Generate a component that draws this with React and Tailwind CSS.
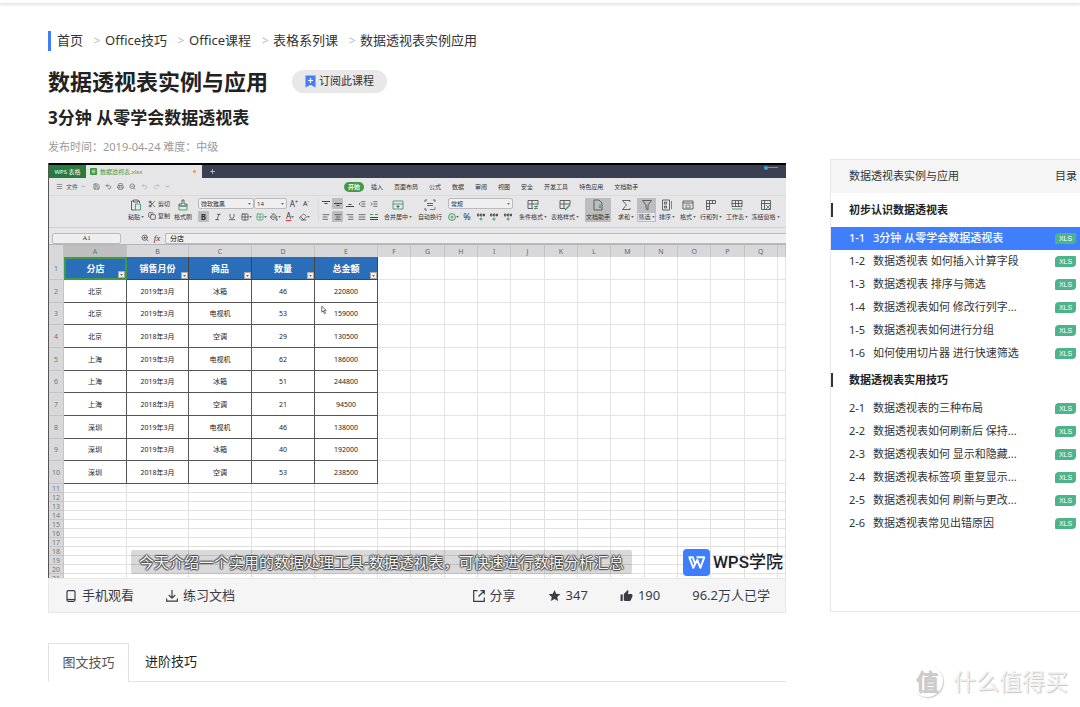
import {
  AlignCenter,
  AlignJustify,
  AlignLeft,
  AlignRight,
  ChevronDown,
  Clipboard,
  Copy,
  Eraser,
  Grid2x2,
  Indent,
  Italic,
  Menu,
  Outdent,
  PaintBucket,
  Plus,
  Printer,
  Redo2,
  Save,
  Scissors,
  SearchCheck,
  Undo2,
  Underline,
  ZoomIn,
} from 'lucide-react';
import clsx from 'clsx';

const crumbs = ['首页', 'Office技巧', 'Office课程', '表格系列课', '数据透视表实例应用'];

const menus = ['插入', '页面布局', '公式', '数据', '审阅', '视图', '安全', '开发工具', '特色应用', '文档助手'];

const columns = ['A', 'B', 'C', 'D', 'E', 'F', 'G', 'H', 'I', 'J', 'K', 'L', 'M', 'N', 'O', 'P', 'Q', ''];

const sheet = [
  ['分店', '销售月份', '商品', '数量', '总金额'],
  ['北京', '2019年3月', '冰箱', '46', '220800'],
  ['北京', '2019年3月', '电视机', '53', '159000'],
  ['北京', '2018年3月', '空调', '29', '130500'],
  ['上海', '2019年3月', '电视机', '62', '186000'],
  ['上海', '2019年3月', '冰箱', '51', '244800'],
  ['上海', '2018年3月', '空调', '21', '94500'],
  ['深圳', '2019年3月', '电视机', '46', '138000'],
  ['深圳', '2019年3月', '冰箱', '40', '192000'],
  ['深圳', '2018年3月', '空调', '53', '238500'],
];

const emptyRows = [11, 12, 13, 14, 15, 16, 17, 18, 19, 20, 21];

const chapters = [
  {
    title: '初步认识数据透视表',
    lessons: [
      { no: '1-1', name: '3分钟 从零学会数据透视表', active: true },
      { no: '1-2', name: '数据透视表 如何插入计算字段' },
      { no: '1-3', name: '数据透视表 排序与筛选' },
      { no: '1-4', name: '数据透视表如何 修改行列字...' },
      { no: '1-5', name: '数据透视表如何进行分组' },
      { no: '1-6', name: '如何使用切片器 进行快速筛选' },
    ],
  },
  {
    title: '数据透视表实用技巧',
    lessons: [
      { no: '2-1', name: '数据透视表的三种布局' },
      { no: '2-2', name: '数据透视表如何刷新后 保持...' },
      { no: '2-3', name: '数据透视表如何 显示和隐藏...' },
      { no: '2-4', name: '数据透视表标签项 重复显示...' },
      { no: '2-5', name: '数据透视表如何 刷新与更改...' },
      { no: '2-6', name: '数据透视表常见出错原因' },
    ],
  },
];

function Caret() {
  return (
    <svg viewBox="0 0 4 3" className="w-[3px] h-[2px] shrink-0" fill="#666">
      <path d="M0 0h4L2 3z" />
    </svg>
  );
}

// Big ribbon button: drawing on top, label below
function Tool({ label, width, caret, active, split, children }) {
  return (
    <button
      type="button"
      className={clsx(
        'h-6 shrink-0 flex flex-col items-center justify-between rounded-[1px] whitespace-nowrap',
        width,
        active && 'bg-[#bdbdbf]'
      )}
    >
      <span className={clsx('w-full h-[14px] flex items-center justify-center', split && 'bg-[#bdbdbf]')}>
        <svg viewBox="0 0 12 12" className="size-3" fill="none" stroke="#555" strokeWidth="0.9">
          {children}
        </svg>
      </span>
      <span className={clsx('h-[10px] flex items-center gap-px', split && 'border border-[#bdbdbf]')}>
        {label}
        {caret && <Caret />}
      </span>
    </button>
  );
}

function IconButton({ label, active, children }) {
  return (
    <button
      type="button"
      aria-label={label}
      className={clsx('size-[11px] flex items-center justify-center rounded-[1px]', active && 'bg-[#bdbdbf]')}
    >
      {children}
    </button>
  );
}

function Picker({ label, value, width }) {
  return (
    <span className={clsx('h-[11px] flex items-center border border-[#bbb] bg-[#efeff0] rounded-[2px] px-0.5', width)}>
      <select aria-label={label} className="flex-1 min-w-0 appearance-none leading-none outline-none">
        <option>{value}</option>
      </select>
      <Caret />
    </span>
  );
}

function Ribbon() {
  return (
    <div className="h-8 pt-0.5 pl-[75px] flex items-start border-b border-[#cfcfd1] overflow-hidden">
      <Tool label="粘贴" width="w-6" caret>
        <path d="M3.500 2H1.500v9h4M8 2h1.500v2M3.500 1h4.500v2H3.500z" />
        <path d="M5.500 5h5v6h-5z" stroke="#3a9d62" />
      </Tool>
      <div className="w-6 h-6 shrink-0 flex flex-col justify-between whitespace-nowrap">
        <button type="button" className="h-3 flex items-center gap-0.5">
          <Scissors className="size-2" /> 剪切
        </button>
        <button type="button" className="h-3 flex items-center gap-0.5">
          <Copy className="size-2" /> 复制
        </button>
      </div>
      <Tool label="格式刷" width="w-[22px]">
        <path d="M5 1h2v4h3v2H2V5h3z" />
        <path d="M2 7h8v4H2z" stroke="#3a9d62" />
      </Tool>

      <div className="w-[116px] ml-1 h-6 shrink-0 flex flex-col justify-between">
        <div className="flex items-center">
          <Picker label="字体" value="微软雅黑" width="w-[56px]" />
          <Picker label="字号" value="14" width="w-[33px]" />
          <button type="button" className="w-3 text-[8px] leading-none ml-px">A<sup>+</sup></button>
          <button type="button" className="w-3 text-[7px] leading-none">A<sup>-</sup></button>
        </div>
        <div className="flex items-center justify-between pr-1">
          <IconButton label="加粗" active><b className="text-[8px] leading-none">B</b></IconButton>
          <IconButton label="倾斜"><Italic className="size-2" /></IconButton>
          <IconButton label="下划线"><Underline className="size-2" /></IconButton>
          <IconButton label="边框"><Grid2x2 className="size-2 shrink-0" /><Caret /></IconButton>
          <IconButton label="绘制表格"><Grid2x2 className="size-2 shrink-0 text-[#3a9d62]" /><Caret /></IconButton>
          <IconButton label="填充颜色"><PaintBucket className="size-2 shrink-0" /><Caret /></IconButton>
          <IconButton label="字体颜色"><span className="text-[8px] leading-none border-b border-red-500">A</span><Caret /></IconButton>
          <IconButton label="清除"><Eraser className="size-2 shrink-0" /><Caret /></IconButton>
        </div>
      </div>

      <div className="w-[62px] ml-1 h-6 shrink-0 grid grid-cols-5 content-between border-l border-[#dadadc] pl-px">
        <IconButton label="顶端对齐">
          <svg viewBox="0 0 8 8" className="size-2" stroke="#444" fill="none"><path d="M0 1.500h8M2.500 3.500h3" /></svg>
        </IconButton>
        <IconButton label="垂直居中" active>
          <svg viewBox="0 0 8 8" className="size-2" stroke="#444" fill="none"><path d="M0 3.500h8M2.500 5.500h3" /></svg>
        </IconButton>
        <IconButton label="底端对齐">
          <svg viewBox="0 0 8 8" className="size-2" stroke="#444" fill="none"><path d="M0 6.500h8M2.500 4.500h3" /></svg>
        </IconButton>
        <IconButton label="减少缩进"><Outdent className="size-2" /></IconButton>
        <IconButton label="增加缩进"><Indent className="size-2" /></IconButton>
        <IconButton label="左对齐"><AlignLeft className="size-2" /></IconButton>
        <IconButton label="居中" active><AlignCenter className="size-2" /></IconButton>
        <IconButton label="右对齐"><AlignRight className="size-2" /></IconButton>
        <IconButton label="两端对齐"><AlignJustify className="size-2" /></IconButton>
        <IconButton label="分散对齐">
          <svg viewBox="0 0 8 8" className="size-2" stroke="#444" fill="none">
            <path d="M0 4.500h8M0 6.500h8" /><path d="M0 1.500h3M5 1.500h3" stroke="#3a9d62" />
          </svg>
        </IconButton>
      </div>

      <Tool label="合并居中" width="w-9" caret>
        <path d="M1 2h10v8H1zM1 5h10" stroke="#3a9d62" />
        <path d="M6 6v3M4.500 7.500h3" />
      </Tool>
      <Tool label="自动换行" width="w-7">
        <path d="M3 1H1v2M9 1h2v2M3 4.500h6M3 6.500h6M1 9v2h2" />
        <path d="M6 10.500h5V8" stroke="#3a9d62" />
      </Tool>

      <div className="w-[65px] mx-1 h-6 shrink-0 flex flex-col justify-between">
        <Picker label="数字格式" value="常规" width="w-full" />
        <div className="flex items-center justify-between">
          <IconButton label="货币">
            <svg viewBox="0 0 8 8" className="size-2 shrink-0" stroke="#3a9d62" fill="none"><circle cx="4" cy="4" r="3.400" /><circle cx="4" cy="4" r="1" /></svg>
            <Caret />
          </IconButton>
          <IconButton label="百分比"><span className="text-[9px] leading-none">%</span></IconButton>
          {['千位分隔', '增加小数位', '减少小数位'].map((name) => (
            <IconButton key={name} label={name}>
              <svg viewBox="0 0 8 8" className="size-2" stroke="#555" fill="none">
                <path d="M.5 1h1.500v2H.5zM3.500 1H5v2H3.500zM6.500 1h1v2h-1z" /><path d="M4 4.500v3M2.500 6h3" stroke="#3a9d62" />
              </svg>
            </IconButton>
          ))}
        </div>
      </div>

      <Tool label="条件格式" width="w-8" caret>
        <path d="M1 1.500h10v4M1 1.500v8h5M1 5h10M5 1.500v8" />
        <path d="M7 7.500h4M7 9.500h4M10 6.500l-2 4" stroke="#3a9d62" />
      </Tool>
      <Tool label="表格样式" width="w-8" caret>
        <path d="M1 1.500h10v4M1 1.500v8h5M1 5h10M5 1.500v8" />
        <path d="M6 11l5-5" stroke="#3a9d62" strokeWidth="1.500" />
      </Tool>
      <div className="mx-1 shrink-0">
        <Tool label="文档助手" width="w-[26px]" active>
          <path d="M2 1h5l3 3v7H2z" />
          <path d="M8 5v4M6.500 7.500L8 9l1.500-1.500" stroke="#3a9d62" />
        </Tool>
      </div>
      <Tool label="求和" width="w-[22px]" caret>
        <path d="M10 3V1.500H2.500L6.500 6l-4 4.500H10V9" />
      </Tool>
      <Tool label="筛选" width="w-[19px]" caret split>
        <path d="M1.500 1.500h9L7 6v5L5 9.500V6z" />
      </Tool>
      <Tool label="排序" width="w-[22px]" caret>
        <path d="M1.500 1h7v10h-7zM3.500 3h2v2h-2zM3.500 7h2v2h-2z" />
        <path d="M10.500 2v8" stroke="#3a9d62" />
      </Tool>
      <Tool label="格式" width="w-5" caret>
        <path d="M1 2h10v8H1zM1 4h10" />
        <path d="M4 6h4v3H4z" stroke="#3a9d62" />
      </Tool>
      <Tool label="行和列" width="w-[26px]" caret>
        <path d="M1.500 1.500h9v3h-6v6h-3zM4.500 1.500v3h-3M7.500 1.500v3M1.500 7.500h3" />
      </Tool>
      <Tool label="工作表" width="w-[26px]" caret>
        <path d="M1 1.500h10v6H1zM4.500 1.500v6M7.500 1.500v6M1 4.500h10" />
        <path d="M1 10h10" stroke="#3a9d62" />
      </Tool>
      <Tool label="冻结窗格" width="w-[31px]" caret>
        <path d="M1.500 1.500h9v9h-9zM1.500 4.500h9M4.500 1.500v9" />
        <path d="M6 6l4 4M10 6l-4 4" stroke="#3a9d62" />
      </Tool>
    </div>
  );
}

function Sheet() {
  return (
    <div className="h-[334px] overflow-hidden border-t border-[#b5b5b8] bg-white">
      <table className="w-full table-fixed border-separate border-spacing-0 text-center text-[7px] leading-[7px] text-[#222]">
        <colgroup>
          <col className="w-[15px]" />
          <col className="w-[63px]" />
          <col className="w-[62px]" />
          <col className="w-[63px]" />
          <col className="w-[63px]" />
          <col className="w-[63px]" />
          {columns.slice(5, 17).map((c) => <col key={c} />)}
          <col className="w-2" />
        </colgroup>
        <thead>
          <tr className="h-3 bg-[#d8d8da] text-[#666]">
            <th className="border-r border-[#c4c4c6]" />
            {columns.map((c, i) => (
              <th
                key={i}
                className={clsx('font-normal border-r border-[#c4c4c6]', i === 0 && 'bg-[#bfbfc1] text-[#3a8f4a]')}
              >
                {c}
              </th>
            ))}
          </tr>
        </thead>
        <tbody>
          {sheet.map((row, r) => (
            <tr key={r} className={r % 3 === 2 ? 'h-[22px]' : 'h-[23px]'}>
              <th className="font-normal text-[#777] bg-[#d8d8da] border-r border-b border-[#c4c4c6]">{r + 1}</th>
              {row.map((cell, c) =>
                r === 0 ? (
                  <th
                    key={c}
                    className={clsx(
                      'relative bg-[#2a6db8] text-white text-[9px] leading-[9px] font-bold',
                      c === 0 ? 'border-2 border-[#3f9a45]' : 'border-r border-b border-[#444]'
                    )}
                  >
                    {cell}
                    <span className="absolute right-0 bottom-0 size-[7px] bg-[#eee] border border-[#aaa] flex items-center justify-center">
                      <Caret />
                    </span>
                  </th>
                ) : (
                  <td key={c} className="border-r border-b border-[#555]">{cell}</td>
                )
              )}
              {columns.slice(5).map((c, i) => (
                <td key={i} className="border-r border-b border-[#e4e4e4]" />
              ))}
            </tr>
          ))}
          {emptyRows.map((n) => (
            <tr key={n} className="h-[9px]">
              <th className="font-normal text-[#777] bg-[#d8d8da] border-r border-b border-[#c4c4c6]">{n}</th>
              {columns.map((c, i) => (
                <td key={i} className="border-r border-b border-[#e0e0e0]" />
              ))}
            </tr>
          ))}
        </tbody>
      </table>
    </div>
  );
}

function Player() {
  return (
    <div className="relative bg-[#e6e6e8] text-[6px] leading-[8px] text-[#333] border-l border-[#555]">
      <div className="h-[15px] border-t-2 border-black bg-[#3b4050] flex items-stretch">
        <div className="w-[37px] bg-[#2b7a3d] text-white flex items-center justify-center">WPS 表格</div>
        <div className="w-[116px] bg-[#e6e6e8] text-[#3f9a45] flex items-center px-1 gap-[3px]">
          <svg viewBox="0 0 8 8" className="size-[7px]">
            <rect width="8" height="8" rx="1" fill="#3f9a45" />
            <path d="M2 2.500h4M2 4h4M2 5.500h4" stroke="#fff" strokeWidth="0.700" />
          </svg>
          数据透视表.xlsx
          <span className="ml-auto mr-0.5 size-[3px] rounded-full bg-[#ef9a3d]" />
        </div>
        <button type="button" aria-label="新建" className="w-5 flex items-center justify-center text-white">
          <Plus className="size-[7px]" />
        </button>
        <span className="ml-auto mr-2 mt-0.5 w-3.5 h-px bg-[#2fa8e6] flex items-center">
          <i className="size-1 shrink-0 rounded-full bg-[#2fa8e6]" />
        </span>
      </div>

      <div className="h-[18px] flex items-center border-b border-[#dadadc] whitespace-nowrap">
        <div className="w-[295px] shrink-0 pl-[7px] flex items-center gap-[5px] text-[#555]">
          <button type="button" className="flex items-center gap-[3px] mr-0.5">
            <Menu className="size-[7px]" /> 文件 <ChevronDown className="size-[5px]" />
          </button>
          <Save className="size-[7px]" />
          <Undo2 className="size-[7px]" />
          <Printer className="size-[7px]" />
          <SearchCheck className="size-[7px]" />
          <Undo2 className="size-[7px] text-[#aaa]" />
          <Redo2 className="size-[7px] text-[#aaa]" />
          <ChevronDown className="size-[5px]" />
        </div>
        <button type="button" className="w-5 h-[10px] shrink-0 rounded-full bg-[#3f9a45] text-white font-bold">开始</button>
        <div className="pl-[7px] flex gap-[11px]">
          {menus.map((m) => <button type="button" key={m}>{m}</button>)}
        </div>
      </div>

      <Ribbon />

      <div className="h-4 pt-1 pl-[3px] flex items-center">
        <input
          aria-label="名称框"
          defaultValue="A1"
          className="w-[69px] h-[11px] border border-[#bbb] bg-[#efeff0] rounded-[2px] text-center font-['Liberation_Serif',serif] text-[7px]"
        />
        <ZoomIn className="size-2 ml-5" />
        <i className="w-4 text-center text-[9px] font-['Liberation_Serif',serif]">fx</i>
        <input
          aria-label="编辑栏"
          defaultValue="分店"
          className="flex-1 h-[11px] border border-r-0 border-[#bbb] bg-[#efeff0] rounded-l-[2px] px-1 text-[7px] text-black"
        />
      </div>

      <Sheet />

      {/* mouse pointer inside the recording */}
      <svg viewBox="0 0 8 12" className="absolute left-[272px] top-[142px] w-[6px] h-[10px]" fill="#fff" stroke="#444">
        <path d="M1 1v8l2-2 1.500 4 1.500-.600L4.500 6.500H7z" />
      </svg>

      <p className="absolute left-[82px] bottom-1 h-6 px-2 rounded-[2px] bg-black/15 whitespace-nowrap text-[15px] leading-6 text-[#f4f4f4] [text-shadow:1px_0_1px_#444,-1px_0_1px_#444,0_1px_1px_#444,0_-1px_1px_#444]">
        今天介绍一个实用的数据处理工具-数据透视表，可快速进行数据分析汇总
      </p>

      <div className="absolute right-[3px] bottom-0.5 flex items-center gap-[3px] text-[17px] leading-[27px] font-medium text-[#1c1f2b] font-[Roboto,'Noto_Sans_CJK_SC',sans-serif]">
        <svg viewBox="0 0 27 27" className="size-[27px]">
          <rect width="27" height="27" rx="4" fill="#3d7eff" />
          <path
            d="M12 14.500L9.800 8.300H6.300L10.300 18.800 14.300 10.800 17.300 18.800 21.300 8.300H13.500"
            fill="none"
            stroke="#fff"
            strokeWidth="1.900"
            strokeLinejoin="round"
          />
        </svg>
        WPS学院
      </div>
    </div>
  );
}

function ActionBar() {
  return (
    <div className="h-[35px] px-[15px] flex items-center border border-[#e8e8e8] bg-[#f5f5f5] text-[13px] text-[#3a3d45]">
      <button type="button" className="flex items-center gap-[5px] pl-px">
        <svg viewBox="0 0 12 12" className="size-3" fill="none" stroke="currentColor" strokeWidth="1.200">
          <rect x="2" y="0.700" width="8" height="10.600" rx="1.200" />
          <path d="M2 9.500h8" />
        </svg>
        手机观看
      </button>
      <button type="button" className="flex items-center gap-[5px] ml-8">
        <svg viewBox="0 0 12 12" className="size-3" fill="none" stroke="currentColor" strokeWidth="1.200">
          <path d="M6 0v8M2.800 5L6 8.200 9.200 5M.6 8.500v2.700h10.800V8.500" />
        </svg>
        练习文档
      </button>
      <div className="ml-auto flex items-center gap-8">
        <button type="button" className="flex items-center gap-[5px]">
          <svg viewBox="0 0 12 12" className="size-3" fill="none" stroke="currentColor" strokeWidth="1.200">
            <path d="M4.500.7H.7v10.600h10.600V7.500M7.500.7h3.800v3.800M11 1L5.500 6.500" />
          </svg>
          分享
        </button>
        <button type="button" className="flex items-center gap-[5px]">
          <svg viewBox="1 1 22 21" className="size-[13px]" fill="currentColor">
            <path d="M12 17.270L18.180 21l-1.640-7.030L22 9.240l-7.190-.61L12 2 9.190 8.630 2 9.240l5.460 4.730L5.820 21z" />
          </svg>
          347
        </button>
        <button type="button" className="flex items-center gap-[5px]">
          <svg viewBox="0 0 24 22" className="size-[13px]" fill="currentColor">
            <path d="M1 21h4V9H1v12zm22-11c0-1.100-.9-2-2-2h-6.310l.95-4.570.03-.32c0-.41-.17-.79-.44-1.060L14.170 1 7.590 7.590C7.220 7.950 7 8.450 7 9v10c0 1.100.9 2 2 2h9c.83 0 1.540-.5 1.840-1.220l3.020-7.050c.09-.23.14-.47.14-.73v-2z" />
          </svg>
          190
        </button>
        <span>96.2万人已学</span>
      </div>
    </div>
  );
}

function Catalog() {
  return (
    <aside className="w-[250px] shrink-0 h-[453px] border border-r-0 border-[#e8e8e8] text-[11px] text-[#333] whitespace-nowrap">
      <div className="h-[33px] pl-[18px] pr-[3px] flex items-center justify-between bg-[#f5f5f5]">
        <span>数据透视表实例与应用</span>
        <span>目录</span>
      </div>
      {chapters.map((chapter) => (
        <section key={chapter.title}>
          <h3 className="h-[34px] flex items-center font-bold text-[#222] before:w-0.5 before:h-3.5 before:mr-4 before:bg-[#333]">
            {chapter.title}
          </h3>
          <ul className="-mb-0.5">
            {chapter.lessons.map((lesson) => (
              <li key={lesson.no}>
                <a
                  href="#"
                  className={clsx(
                    'h-[23px] pl-[18px] pr-1 flex items-center',
                    lesson.active && 'bg-[#3f7ffb] text-white font-medium'
                  )}
                >
                  <span className="w-6">{lesson.no}</span>
                  <span>{lesson.name}</span>
                  <span className="ml-auto w-[21px] h-[11px] rounded-tl-[4px] rounded-br-[4px] rounded-tr-[1px] rounded-bl-[1px] bg-[#4db38a] text-white text-[7px] leading-[11px] font-normal text-center font-['Liberation_Sans',sans-serif]">
                    XLS
                  </span>
                </a>
              </li>
            ))}
          </ul>
        </section>
      ))}
    </aside>
  );
}

export default function App() {
  return (
    <div className="relative min-h-screen overflow-hidden bg-white text-[#222] font-['Noto_Sans','Noto_Sans_CJK_SC',sans-serif]">
      <header className="h-[3px] shadow-[0_2px_3px_rgba(0,0,0,0.12)]" />

      <div className="pl-12 pt-7">
        <nav className="h-5 flex items-center border-l-3 border-[#3f7ffb] pl-1.5 text-[13px] text-[#333] whitespace-nowrap">
          {crumbs.map((c, i) => (
            <span key={c} className="flex items-center">
              {i > 0 && <span className="w-[22px] pl-1.5 text-center text-[12px] text-[#bbb]">&gt;</span>}
              <a href="#">{c}</a>
            </span>
          ))}
        </nav>

        <div className="mt-[18px] h-6 flex items-center gap-6">
          <h1 className="text-[22px] leading-6 font-bold">数据透视表实例与应用</h1>
          <button type="button" className="h-[23px] px-[13px] flex items-center gap-[3px] rounded-full bg-[#e8e8e8] text-[11px] text-[#333]">
            <svg viewBox="0 0 11 13" className="w-[11px] h-[13px]">
              <path d="M.5.5h10v12L5.500 9.800.5 12.500z" fill="#3f7ffb" />
              <path d="M5.500 3v5M3 5.500h5" stroke="#fff" strokeWidth="1.200" />
            </svg>
            订阅此课程
          </button>
        </div>
        <h2 className="mt-[13px] text-[17px] leading-6 font-bold">3分钟 从零学会数据透视表</h2>
        <p className="mt-[9px] text-[11px] leading-4 text-[#999]">发布时间：2019-04-24 难度：中级</p>

        <div className="pt-1 flex items-start gap-11">
          <main className="flex-1 min-w-0 pt-1">
            <Player />
            <ActionBar />
            <div role="tablist" className="mt-[30px] h-[39px] flex text-[13px]">
              <button type="button" role="tab" aria-selected="true" className="w-[81px] border border-b-0 border-[#e2e2e2] text-[#555]">
                图文技巧
              </button>
              <button type="button" role="tab" aria-selected="false" className="flex-1 pl-4 text-left border-b border-[#e2e2e2]">
                进阶技巧
              </button>
            </div>
          </main>
          <Catalog />
        </div>
      </div>

      <div className="absolute right-3 bottom-[10px] flex items-center gap-2.5 text-[#f2f2f2] text-[23px] leading-8 [text-shadow:1px_1px_1px_#c4c4c4]">
        <span className="size-8 rounded-full text-center shadow-[1px_1px_1px_#ccc] text-[#ccc] font-medium">值</span>
        什么值得买
      </div>
    </div>
  );
}
